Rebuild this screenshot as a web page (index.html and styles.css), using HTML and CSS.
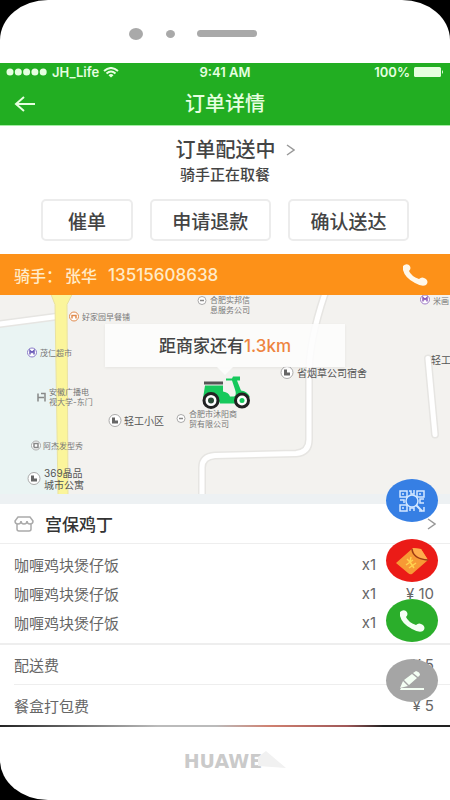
FILE: index.html
```html
<!DOCTYPE html>
<html lang="zh-CN">

<head>
    <meta charset="UTF-8">
    <meta name="viewport" content="width=device-width, initial-scale=1.0">
    <title>订单详情</title>
    <link rel="stylesheet" href="styles.css">
</head>

<body>
    <div class="phone">
        <div class="phone-top">
            <span class="camera"></span>
            <span class="sensor"></span>
            <span class="speaker"></span>
        </div>

        <main class="screen">
            <header class="header">
                <div class="status-bar">
                    <div class="carrier">
                        <svg width="42" height="8" viewBox="0 0 42 8" fill="currentColor">
                            <circle cx="4" cy="4" r="3.5" />
                            <circle cx="12.3" cy="4" r="3.5" />
                            <circle cx="20.6" cy="4" r="3.5" />
                            <circle cx="28.9" cy="4" r="3.5" />
                            <circle cx="37.2" cy="4" r="3.5" />
                        </svg>
                        <span>JH_Life</span>
                        <svg width="16" height="11" viewBox="0 0 16 11" fill="none" stroke="currentColor" stroke-width="2">
                            <path d="M1 4Q8-2 15 4M3.5 6.5Q8 2.5 12.500 6.500" />
                            <path d="M5.500 8.200Q8 6 10.500 8.200L8 10.500Z" fill="currentColor" stroke="none" />
                        </svg>
                    </div>
                    <span>9:41 AM</span>
                    <div class="battery">
                        <span>100%</span>
                        <svg width="30" height="10" viewBox="0 0 30 10" fill="currentColor">
                            <rect width="27" height="10" rx="1.500" />
                            <path d="M28 3q2 2 0 4z" />
                        </svg>
                    </div>
                </div>
                <div class="title-bar">
                    <button type="button" class="back" aria-label="返回">
                        <svg width="22" height="16" viewBox="0 0 22 16" fill="none" stroke="currentColor" stroke-width="2">
                            <path d="M21 8H2M10 1L2 8l8 7" />
                        </svg>
                    </button>
                    <h1>订单详情</h1>
                </div>
            </header>

            <section class="state">
                <a href="#" class="state-link">
                    订单配送中
                    <svg width="9" height="12" viewBox="0 0 9 12" fill="none" stroke="#999" stroke-width="1.500">
                        <path d="M1 1l7 5-7 5" />
                    </svg>
                </a>
                <p>骑手正在取餐</p>
                <div class="actions">
                    <button type="button" class="btn">催单</button>
                    <button type="button" class="btn">申请退款</button>
                    <button type="button" class="btn">确认送达</button>
                </div>
            </section>

            <section class="rider">
                <span>骑手：</span>
                <span>张华</span>
                <span class="number">13515608638</span>
                <button type="button" class="call" aria-label="联系骑手">
                    <svg width="26" height="22" viewBox="0 0 26 22" fill="currentColor">
                        <path d="M1 2Q4-1 7 1Q10 4 7 7Q9 12 17 15Q20 12 24 15Q27 18 24 21Q20 23 13 19Q3 14 1 6Z" />
                    </svg>
                </button>
            </section>

            <section class="map">
                <svg class="map-canvas" viewBox="0 0 450 200" preserveAspectRatio="xMidYMid slice">
                    <rect width="450" height="200" fill="#f3f2ef" />
                    <path d="M0 29L57 22V200H0z" fill="#eaf4f3" />
                    <!-- roads -->
                    <g fill="none" stroke-linejoin="round">
                        <g stroke="#e6e5e2" stroke-width="8">
                            <path d="M-4 30L57 22" />
                            <path d="M326-4Q309 45 309 80V145Q309 158 296 159L215 161Q202 162 202 173V204" />
                            <path d="M428 64L435 140" stroke-linecap="round" />
                        </g>
                        <g stroke="#fff" stroke-width="5">
                            <path d="M-4 30L57 22" />
                            <path d="M326-4Q309 45 309 80V145Q309 158 296 159L215 161Q202 162 202 173V204" />
                            <path d="M428 64L435 140" stroke-linecap="round" />
                        </g>
                    </g>
                    <path d="M51 0H72L67 10L68 200H58L55 10z" fill="#fbf59b" stroke="#e9e2a0" />

                    <!-- places -->
                    <g fill="#fff" stroke="#aaa">
                        <circle cx="74" cy="22" r="4.500" stroke="#e08a4c" />
                        <circle cx="32" cy="58" r="4.500" stroke="#8a7cc8" />
                        <circle cx="425" cy="5" r="4.500" stroke="#a07cc8" />
                        <circle cx="36" cy="151" r="4.500" />
                        <circle cx="34" cy="184" r="6" />
                        <circle cx="115" cy="126" r="6" />
                        <circle cx="287" cy="78" r="6" />
                        <circle cx="181" cy="124" r="4" />
                        <circle cx="202" cy="6" r="4" />
                    </g>
                    <g fill="none" stroke-width="1.500">
                        <path d="M72 24v-3h4v3" stroke="#e08a4c" />
                        <path d="M30 60v-4l2 2 2-2v4" stroke="#6c5cb8" />
                        <path d="M423 7v-4l2 2 2-2v4" stroke="#8c5cb8" />
                        <path d="M38 107v-8M38 103h6M41 99h4v8M34 153v-4h4v4h-4M179 124h4M200 6h4" stroke="#888" />
                    </g>
                    <g fill="#666">
                        <path d="M31 187v-6h3v3h3v3zM112 129v-6h3v3h3v3zM284 81v-6h3v3h3v3z" />
                    </g>
                    <g class="place">
                        <text x="82" y="25">好家园早餐铺</text>
                        <text x="40" y="61">茂仁超市</text>
                        <text x="49" y="100">安徽广播电</text>
                        <text x="49" y="110">视大学-东门</text>
                        <text x="43" y="154">阿杰发型秀</text>
                        <text x="189" y="122">合肥市沐阳商</text>
                        <text x="189" y="132">贸有限公司</text>
                        <text x="210" y="8">合肥实邦信</text>
                        <text x="210" y="18">息服务公司</text>
                        <text x="433" y="9">米画</text>
                    </g>
                    <g class="place place-large">
                        <text x="44" y="182">369晶品</text>
                        <text x="44" y="194">城市公寓</text>
                        <text x="124" y="130">轻工小区</text>
                        <text x="297" y="82">省烟草公司宿舍</text>
                        <text x="431" y="69">轻工</text>
                    </g>

                    <!-- scooter -->
                    <path d="M205 91H223V97Q229 98 230 102H234Q237 101 235 95L232 86H226V84H232L233 82H240V86H237L241 96Q248 97 250 103Q242 99 236 109H220Q216 98 203 104Z" fill="#16c95c" />
                    <path d="M204 87H223V90H204z" fill="#555" />
                    <g fill="#fff" stroke="#222" stroke-width="3">
                        <circle cx="211" cy="106" r="7" />
                        <circle cx="242" cy="106" r="6.500" />
                    </g>
                    <circle cx="211" cy="106" r="3" fill="#2a4a36" />
                    <circle cx="242" cy="106" r="2.500" fill="#16c95c" />
                </svg>
                <div class="bubble">距商家还有<em>1.3km</em></div>
            </section>

            <section class="order">
                <a href="#" class="shop">
                    <svg width="20" height="16" viewBox="0 0 20 16" fill="none" stroke="#aaa" stroke-width="1.500">
                        <path d="M4 1H16L19 5Q19 8 16 8Q13 8 13 5Q13 8 10 8Q7 8 7 5Q7 8 4 8Q1 8 1 5ZM3 8V13Q3 15 5 15H15Q17 15 17 13V8" />
                    </svg>
                    <span>宫保鸡丁</span>
                    <svg class="arrow" width="9" height="12" viewBox="0 0 9 12" fill="none" stroke="#999" stroke-width="1.500">
                        <path d="M1 1l7 5-7 5" />
                    </svg>
                </a>
                <ul class="goods">
                    <li><span>咖喱鸡块煲仔饭</span><span>x1</span><span class="price">¥ 10</span></li>
                    <li><span>咖喱鸡块煲仔饭</span><span>x1</span><span class="price">¥ 10</span></li>
                    <li><span>咖喱鸡块煲仔饭</span><span>x1</span><span class="price">¥ 10</span></li>
                </ul>
                <ul class="fees">
                    <li><span>配送费</span><span class="price">¥ 5</span></li>
                    <li><span>餐盒打包费</span><span class="price">¥ 5</span></li>
                </ul>
            </section>

            <nav class="float-menu">
                <button type="button" class="fab fab-scan" aria-label="扫码">
                    <svg width="28" height="24" viewBox="0 0 28 24" fill="none" stroke="currentColor" stroke-width="1.500">
                        <path d="M9 2H2V8H9ZM26 2H19V8H26ZM9 16H2V22H9ZM5 4v2M22 4v2M5 18v2M11 2h2v3h3V1M2 11h4v3M26 10h-4v4h4M12 22v-3h4v3M21 22h5v-4" />
                        <circle cx="14" cy="12" r="6" fill="#367fe4" />
                        <path d="M18 16l6 6" stroke-width="2" />
                    </svg>
                </button>
                <button type="button" class="fab fab-gift" aria-label="红包">
                    <svg width="34" height="30" viewBox="0 0 34 30">
                        <path d="M1 17L18 2L26 3L33 14L17 28Q15 29 13 27Z" fill="#f79a35" />
                        <path d="M18 2L26 3L33 14Q19 14 18 2Z" fill="#ffad4d" />
                        <path d="M17 3Q18 13 33 14" fill="none" stroke="#9c3a14" stroke-width="1.500" />
                        <path d="M12 13l3 3 1-5M11 19l7-5M14 22l7-5M15 16l4 6" fill="none" stroke="#ffd34f" stroke-width="1.500" />
                    </svg>
                </button>
                <button type="button" class="fab fab-call" aria-label="电话">
                    <svg width="26" height="22" viewBox="0 0 26 22" fill="currentColor">
                        <path d="M1 2Q4-1 7 1Q10 4 7 7Q9 12 17 15Q20 12 24 15Q27 18 24 21Q20 23 13 19Q3 14 1 6Z" />
                    </svg>
                </button>
                <button type="button" class="fab fab-edit" aria-label="编辑">
                    <svg width="26" height="20" viewBox="0 0 26 20" fill="currentColor">
                        <path d="M1 17L4 10L9 15ZM5 9L13 3L18 7L10 14ZM14 2L17 0Q21 1 21 4L19 6ZM2 17H25V19H1Z" />
                    </svg>
                </button>
            </nav>
        </main>

        <footer class="phone-bottom">
            <span class="brand">HUAWE</span>
            <svg class="smudge" width="28" height="20" viewBox="0 0 28 20">
                <path d="M0 6L8 0L28 17L0 15Z" fill="#f1f1f1" />
            </svg>
        </footer>
    </div>
</body>

</html>
```
FILE: styles.css
```css
* {
    box-sizing: border-box;
}

body {
    margin: 0;
    background-color: black;
    color: #444;
    font-family: Inter, "Noto Sans CJK SC", sans-serif;
    font-size: 15px;
}

h1,
p,
ul {
    margin: 0;
    padding: 0;
}

ul {
    list-style: none;
}

a {
    color: inherit;
    text-decoration: none;
}

button {
    padding: 0;
    border: none;
    background: none;
    color: inherit;
    font: inherit;
    cursor: pointer;
}

svg {
    display: block;
    flex: none;
}

.phone {
    min-height: 100vh;
    display: flex;
    flex-direction: column;
    background-color: white;
    border-radius: 48px 48px 0 48px / 40px 40px 0 40px;
    overflow: hidden;
}

/* Phone frame */
.phone-top {
    height: 63px;
    padding: 4px 64px 0 0;
    display: flex;
    align-items: center;
    justify-content: center;
}

.phone-top span {
    background-color: #a9a9a9;
}

.camera {
    width: 14px;
    height: 12px;
    border-radius: 50%;
}

.sensor {
    width: 9px;
    height: 8px;
    margin: 0 22px 0 23px;
    border-radius: 50%;
}

.speaker {
    width: 60px;
    height: 7px;
    border-radius: 4px;
}

.phone-bottom {
    flex: 1;
    display: flex;
    align-items: center;
    justify-content: center;
    padding: 0 0 6px 20px;
}

.brand {
    color: #cacaca;
    font-family: "DejaVu Sans", sans-serif;
    font-size: 19px;
    font-weight: bold;
}

.smudge {
    margin-left: -4px;
}

/* Screen */
.screen {
    position: relative;
    border-bottom: 2px solid;
    border-image: linear-gradient(90deg, #222, #bbb 35%, #bbb 48%, #d08070 60%, #a05858 77%, #222 85%) 1;
}

.header {
    background-color: #22ae22;
    color: #e6ffe0;
    border-bottom: 1px solid #a5eda5;
}

.status-bar {
    height: 18px;
    padding: 0 6px;
    display: grid;
    grid-template-columns: 1fr auto 1fr;
    align-items: center;
    font-size: 13px;
    font-weight: 600;
}

.carrier,
.battery {
    display: flex;
    align-items: center;
    gap: 4px;
}

.battery {
    justify-content: flex-end;
}

.title-bar {
    height: 44px;
    padding: 2px 14px 0;
    display: grid;
    grid-template-columns: 22px 1fr 22px;
    align-items: center;
}

.title-bar h1 {
    font-size: 20px;
    font-weight: 500;
    line-height: 24px;
    text-align: center;
}

.state {
    padding: 10px 0 13px;
    display: flex;
    flex-direction: column;
    align-items: center;
    font-weight: 500;
}

.state-link {
    padding-left: 20px;
    display: flex;
    align-items: center;
    gap: 10px;
    font-size: 20px;
    line-height: 28px;
}

.state p {
    font-size: 15px;
    line-height: 22px;
}

.actions {
    width: 100%;
    margin-top: 13px;
    padding: 0 41px;
    display: flex;
    gap: 17px;
}

.btn {
    height: 42px;
    flex: 4;
    border: 2px solid #ececec;
    border-radius: 5px;
    font-size: 19px;
    white-space: nowrap;
}

.btn:first-child {
    flex: 3;
}

.rider {
    height: 41px;
    padding: 0 22px 0 14px;
    display: flex;
    align-items: center;
    gap: 3px;
    background-color: #fd9118;
    color: #ffebc8;
    font-size: 16px;
    font-weight: 500;
}

.number {
    margin-left: 8px;
    font-size: 17px;
}

.call {
    margin-left: auto;
    color: #fff8ea;
}

/* Map */
.map {
    position: relative;
    height: 209px;
    border-bottom: 10px solid #edf1f3;
}

.map-canvas {
    width: 100%;
    height: 100%;
}

.place {
    fill: #777;
    font-size: 8px;
}

.place-large {
    fill: #555;
    font-size: 10px;
}

.bubble {
    position: absolute;
    top: 29px;
    left: 50%;
    width: 240px;
    padding-top: 2px;
    transform: translateX(-50%);
    background-color: rgba(253, 253, 253, 0.88);
    box-shadow: 0 1px 3px rgba(0, 0, 0, 0.06);
    font-size: 17px;
    font-weight: 500;
    line-height: 41px;
    text-align: center;
}

.bubble::after {
    content: "";
    position: absolute;
    top: 100%;
    left: 50%;
    border: 8px solid transparent;
    border-top-color: rgba(253, 253, 253, 0.88);
    transform: translateX(-50%);
}

.bubble em {
    color: #ee8440;
    font-style: normal;
}

/* Order */
.shop {
    height: 40px;
    padding: 0 14px;
    display: flex;
    align-items: center;
    gap: 11px;
    border-bottom: 1px solid #eee;
    color: #333;
    font-size: 17px;
    font-weight: 500;
}

.arrow {
    margin-left: auto;
}

.goods {
    padding: 6px 16px 6px 14px;
    border-bottom: 2px solid #eee;
}

.goods li {
    height: 29px;
    display: grid;
    grid-template-columns: 1fr auto 58px;
    align-items: center;
}

.goods li,
.fees li {
    color: #666;
}

.price {
    text-align: right;
}

.fees {
    padding: 0 0 0 14px;
}

.fees li {
    height: 39px;
    padding-right: 16px;
    display: flex;
    align-items: center;
    justify-content: space-between;
}

.fees li + li {
    height: 41px;
    border-top: 1px solid #eee;
}

/* Floating buttons */
.float-menu {
    position: absolute;
    right: 12px;
    bottom: 23px;
    display: flex;
    flex-direction: column;
    gap: 17px;
}

.fab {
    width: 52px;
    height: 43px;
    border-radius: 50%;
    display: flex;
    align-items: center;
    justify-content: center;
    color: #f4fff4;
}

.fab-scan {
    background-color: #367fe4;
    color: #d4e8ff;
}

.fab-gift {
    background-color: #eb1b17;
}

.fab-call {
    background-color: #2bae2b;
}

.fab-edit {
    background-color: #a5a5a5;
}
```
